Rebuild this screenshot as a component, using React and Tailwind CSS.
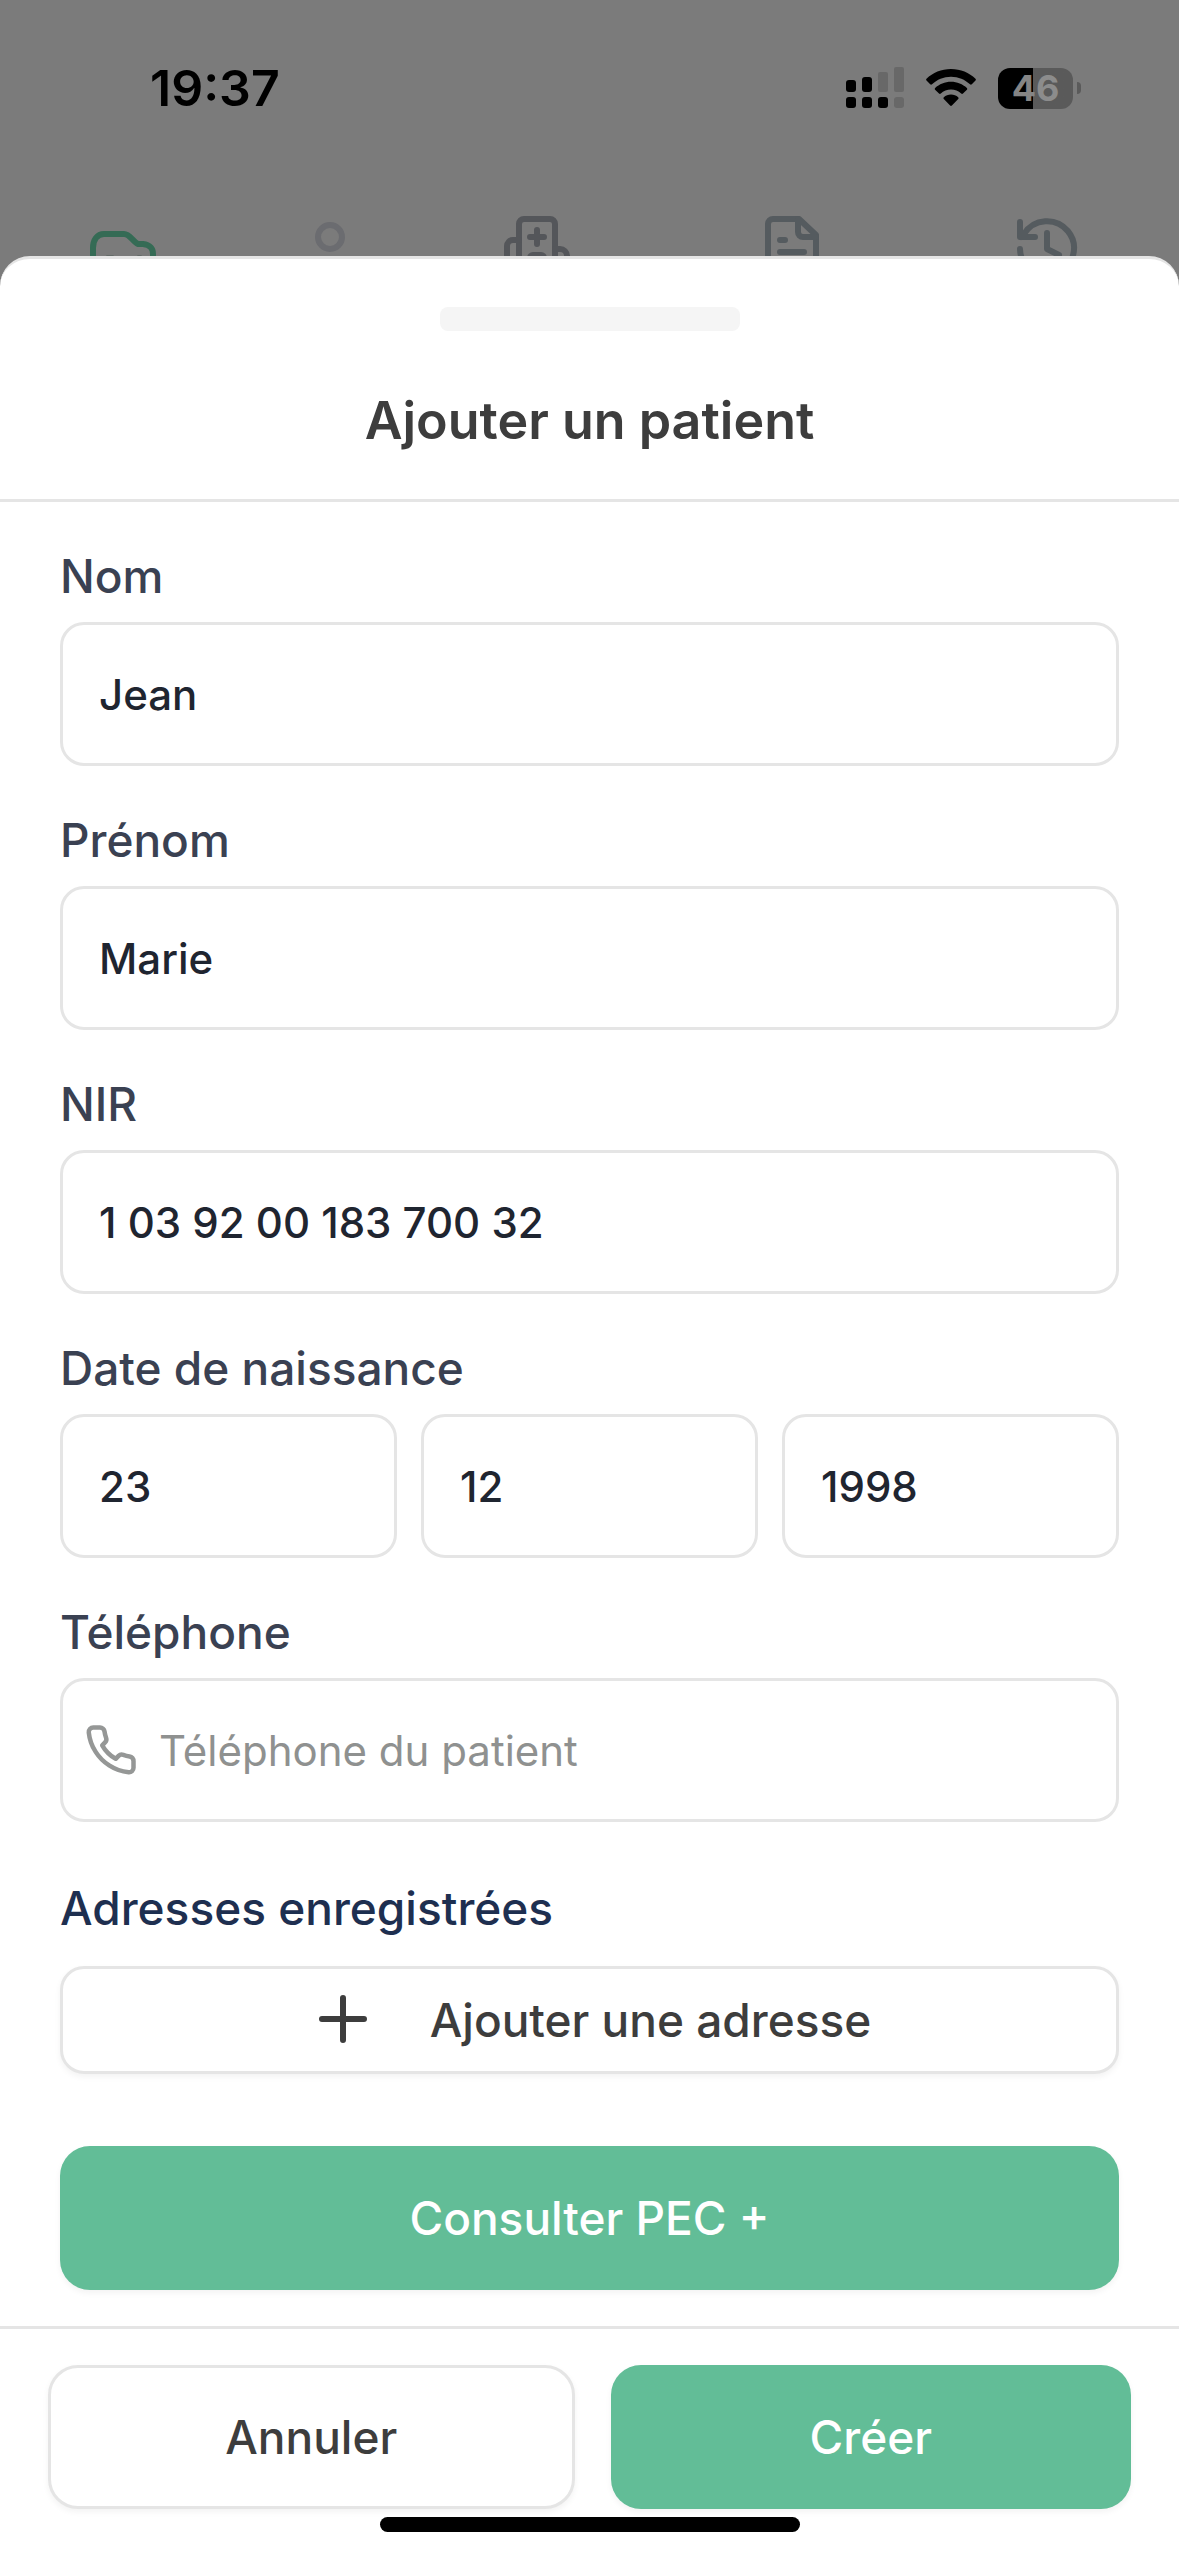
import { useState } from 'react';
import { clsx } from 'clsx';

const labelClass = 'text-[46px] leading-[76px] font-medium text-[#3a4152]';

const inputClass =
  'h-36 w-full min-w-0 rounded-3xl border-3 border-[#e5e5e5] bg-white text-[42px] font-medium text-[#1f2530] outline-none placeholder:font-normal placeholder:text-[#8f9190]';

const buttonClass = 'text-[46px] font-medium shadow-[0_3px_6px_rgba(0,0,0,0.05)]';

const textFields = [
  { id: 'nom', label: 'Nom' },
  { id: 'prenom', label: 'Prénom' },
  { id: 'nir', label: 'NIR' }
];

const dateFields = [
  { id: 'jour', label: 'Jour' },
  { id: 'mois', label: 'Mois' },
  { id: 'annee', label: 'Année' }
];

const tabs = [
  {
    id: 'dossiers',
    label: 'Dossiers',
    color: 'text-[#356b55]',
    shapes: (
      <>
        <path d="M6 60V44C6 36 10 30 17 30H37C43 30 46 38 51 40H56C63 41 66 44 66 50V60" />
        <path d="M20 53H26M51 53H54" strokeWidth="3" className="text-[#4f5c57]" stroke="currentColor" />
      </>
    )
  },
  {
    id: 'patients',
    label: 'Patients',
    color: 'text-[#6b6c70]',
    shapes: <circle cx="36" cy="33" r="12" />
  },
  {
    id: 'etablissements',
    label: 'Établissements',
    color: 'text-[#54565a]',
    shapes: (
      <>
        <path d="M18 66V20a5 5 0 0 1 5-5H49a5 5 0 0 1 5 5V66" />
        <path d="M36 26V40M29 33H43" />
        <path d="M29 66V54a3 3 0 0 1 3-3H40a3 3 0 0 1 3 3V66" />
        <path d="M6 66V42a6 6 0 0 1 6-6H18M54 45H59a7 7 0 0 1 7 7V66" />
      </>
    )
  },
  {
    id: 'documents',
    label: 'Documents',
    color: 'text-[#555b5f]',
    shapes: (
      <>
        <path d="M12 66V20a5 5 0 0 1 5-5H43L60 31V66" />
        <path d="M42 15V28a5 5 0 0 0 5 5H60" />
        <path d="M24 36H29M24 48H48" />
      </>
    )
  },
  {
    id: 'historique',
    label: 'Historique',
    color: 'text-[#555b5f]',
    shapes: (
      <>
        <path d="M9 45A27 27 0 1 0 13 30L10 33" />
        <path d="M9 18V33H24" />
        <path d="M36 29V45L48 51" />
      </>
    )
  }
];

const StatusBar = () => (
  <div className="flex items-center justify-between pt-14 pr-[98px] pl-[150px]">
    <p className="text-[50px] leading-16 font-semibold text-black">19:37</p>

    <div className="flex items-center gap-[22px]">
      {/* Dual SIM signal */}
      <svg width="58" height="42" viewBox="0 0 58 42" className="fill-black" aria-hidden="true">
        <rect x="0" y="13" width="10" height="12" rx="3" />
        <rect x="16" y="10" width="10" height="15" rx="3" />
        <rect x="32" y="5" width="10" height="20" rx="2" className="fill-[#686868]" />
        <rect x="48" y="0" width="10" height="25" rx="2" className="fill-[#686868]" />
        <rect x="0" y="30" width="10" height="11" rx="3" />
        <rect x="16" y="30" width="10" height="11" rx="3" />
        <rect x="32" y="30" width="10" height="11" rx="3" />
        <rect x="48" y="30" width="10" height="11" rx="3" className="fill-[#686868]" />
      </svg>

      {/* Wifi */}
      <svg width="50" height="38" viewBox="0 0 50 38" className="fill-black" aria-hidden="true">
        <path d="M25 0C15.400 0 6.800 3.700 .500 9.700Q-.300 10.600 .500 11.500L4.200 15.300Q5.100 16.100 6 15.300C11 10.500 17.600 7.700 25 7.700S39 10.500 44 15.300Q44.900 16.100 45.800 15.300L49.500 11.500Q50.300 10.600 49.500 9.700C43.200 3.700 34.600 0 25 0Z" />
        <path d="M25 12.800C18.900 12.800 13.300 15.200 9.100 19Q8.200 19.900 9.100 20.800L13 24.600Q13.900 25.400 14.800 24.600C17.500 22.100 21.100 20.600 25 20.600S32.500 22.100 35.200 24.600Q36.100 25.400 37 24.600L40.900 20.800Q41.800 19.900 40.900 19C36.700 15.200 31.100 12.800 25 12.800Z" />
        <path d="M25 25.500C22.200 25.500 19.700 26.500 17.800 28.200Q16.900 29.100 17.800 30L24.100 36.600Q25 37.500 25.900 36.600L32.200 30Q33.100 29.100 32.200 28.200C30.300 26.500 27.800 25.500 25 25.500Z" />
      </svg>

      {/* Battery */}
      <div className="flex items-center gap-1">
        <div className="flex h-[41px] w-[75px] items-center justify-center rounded-xl bg-linear-to-r from-black from-[47%] to-[#5a5a5a] to-[47%] text-4xl leading-none font-bold">
          <span className="text-[#858585]">4</span>
          <span className="text-[#8c8c8c]">6</span>
        </div>
        <div className="h-3 w-1 rounded-r-full bg-[#5a5a5a]" />
      </div>
    </div>
  </div>
);

const TabBar = () => (
  <nav className="mt-21 grid grid-cols-[246fr_168fr_246fr_264fr_246fr] pr-[9px]">
    {tabs.map((tab) => (
      <button
        key={tab.id}
        type="button"
        aria-label={tab.label}
        className={clsx('flex justify-center', tab.color)}
      >
        <svg
          width="72"
          height="72"
          viewBox="0 0 72 72"
          fill="none"
          stroke="currentColor"
          strokeWidth="6"
          strokeLinecap="round"
          strokeLinejoin="round"
        >
          {tab.shapes}
        </svg>
      </button>
    ))}
  </nav>
);

const PhoneIcon = ({ className }) => (
  <svg
    viewBox="0 0 24 24"
    fill="none"
    stroke="currentColor"
    strokeWidth="2"
    strokeLinecap="round"
    strokeLinejoin="round"
    className={className}
    aria-hidden="true"
  >
    <path d="M22 16.920v3a2 2 0 0 1-2.180 2 19.790 19.790 0 0 1-8.630-3.070 19.500 19.500 0 0 1-6-6 19.790 19.790 0 0 1-3.070-8.670A2 2 0 0 1 4.110 2h3a2 2 0 0 1 2 1.720 12.840 12.840 0 0 0 .700 2.810 2 2 0 0 1-.450 2.110L8.090 9.910a16 16 0 0 0 6 6l1.270-1.270a2 2 0 0 1 2.110-.450 12.840 12.840 0 0 0 2.810.700A2 2 0 0 1 22 16.920z" />
  </svg>
);

const App = () => {
  const [patient, setPatient] = useState({
    nom: 'Jean',
    prenom: 'Marie',
    nir: '1 03 92 00 183 700 32',
    jour: '23',
    mois: '12',
    annee: '1998',
    telephone: ''
  });

  const handleChange = (e) => {
    setPatient({ ...patient, [e.target.name]: e.target.value });
  };

  return (
    <div className="flex min-h-screen flex-col bg-[#7b7b7b] font-['Inter',sans-serif]">
      <header className="h-64 shrink-0 overflow-hidden">
        <StatusBar />
        <TabBar />
      </header>

      <form
        className="flex grow flex-col rounded-t-[30px] border-t-3 border-[#e5e5e5] bg-white"
        onSubmit={(e) => e.preventDefault()}
      >
        <div className="flex flex-col items-center border-b-3 border-[#e5e5e5] pt-12 pb-10">
          <div className="h-6 w-[300px] rounded-lg bg-[#f5f5f5]" />
          <h1 className="mt-13 text-[52px] leading-[76px] font-semibold text-[#3d3d3d]">
            Ajouter un patient
          </h1>
        </div>

        <div className="flex grow flex-col gap-9 px-15 py-9">
          {textFields.map((field) => (
            <div key={field.id} className="flex flex-col gap-2">
              <label htmlFor={field.id} className={labelClass}>
                {field.label}
              </label>
              <input
                id={field.id}
                name={field.id}
                type="text"
                value={patient[field.id]}
                onChange={handleChange}
                className={clsx(inputClass, 'px-9')}
              />
            </div>
          ))}

          <fieldset>
            <legend className={clsx(labelClass, 'mb-2')}>Date de naissance</legend>
            <div className="flex gap-6">
              {dateFields.map((field) => (
                <input
                  key={field.id}
                  name={field.id}
                  type="text"
                  aria-label={field.label}
                  value={patient[field.id]}
                  onChange={handleChange}
                  className={clsx(inputClass, 'px-9')}
                />
              ))}
            </div>
          </fieldset>

          <div className="flex flex-col gap-2">
            <label htmlFor="telephone" className={labelClass}>
              Téléphone
            </label>
            <div className="relative">
              <PhoneIcon className="absolute top-1/2 left-6 size-[54px] -translate-y-1/2 text-[#959796]" />
              <input
                id="telephone"
                name="telephone"
                type="tel"
                placeholder="Téléphone du patient"
                value={patient.telephone}
                onChange={handleChange}
                className={clsx(inputClass, 'pr-9 pl-24')}
              />
            </div>
          </div>

          <section className="flex flex-col gap-5 pt-3">
            <h2 className="text-[46px] leading-[76px] font-medium text-[#1e2f50]">
              Adresses enregistrées
            </h2>
            <button
              type="button"
              className={clsx(
                buttonClass,
                'flex h-27 items-center justify-center gap-15 rounded-3xl border-3 border-[#e5e5e5] bg-white pl-2 text-[#3d3d3d]'
              )}
            >
              <svg
                width="54"
                height="54"
                viewBox="0 0 54 54"
                stroke="currentColor"
                strokeWidth="6"
                strokeLinecap="round"
                aria-hidden="true"
              >
                <path d="M27 5V47M6 26H48" />
              </svg>
              Ajouter une adresse
            </button>
          </section>

          <button
            type="button"
            className={clsx(buttonClass, 'mt-9 h-36 rounded-[30px] bg-[#62bd97] text-white')}
          >
            Consulter PEC +
          </button>
        </div>

        <footer className="border-t-3 border-[#e5e5e5] px-12 pt-9 pb-6">
          <div className="flex gap-9">
            <button
              type="button"
              className={clsx(
                buttonClass,
                'h-36 flex-1 rounded-[30px] border-3 border-[#e5e5e5] bg-white text-[#3d3d3d]'
              )}
            >
              Annuler
            </button>
            <button
              type="submit"
              className={clsx(buttonClass, 'h-36 flex-1 rounded-[30px] bg-[#62bd97] text-white')}
            >
              Créer
            </button>
          </div>
          {/* Home indicator */}
          <div className="mx-auto mt-2 h-[15px] w-[420px] rounded-full bg-black" />
        </footer>
      </form>
    </div>
  );
};

export default App;
